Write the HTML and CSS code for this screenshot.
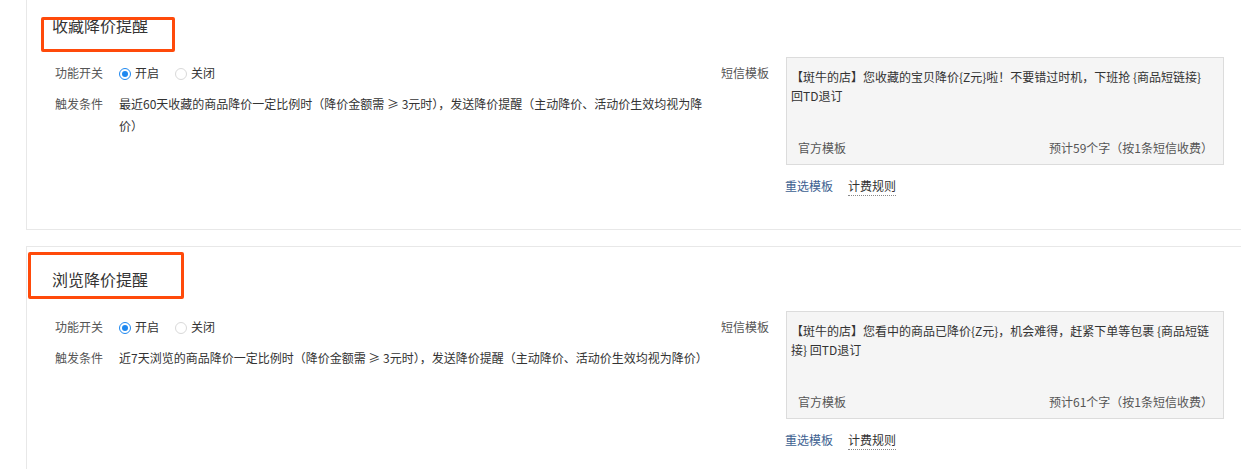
FILE: index.html
```html
<!DOCTYPE html>
<html lang="zh-CN">
<head>
<meta charset="utf-8">
<title>降价提醒</title>
<link rel="stylesheet" href="styles.css">
</head>
<body>
<div class="page">
  <section class="card card-first">
    <h2 class="card-title">收藏降价提醒</h2>
    <div class="mark mark-1"></div>
    <div class="card-body">
      <div class="left">
        <div class="row row-switch">
          <span class="label">功能开关</span>
          <div class="radios">
            <label class="radio"><span class="dot on"></span>开启</label>
            <label class="radio"><span class="dot"></span>关闭</label>
          </div>
        </div>
        <div class="row row-cond">
          <span class="label">触发条件</span>
          <p class="desc">最近60天收藏的商品降价一定比例时（降价金额需 ≥ 3元时），发送降价提醒（主动降价、活动价生效均视为降价）</p>
        </div>
      </div>
      <div class="right">
        <span class="label rlabel">短信模板</span>
        <div class="tpl">
          <div class="tpl-box">
            <p class="tpl-text">【斑牛的店】您收藏的宝贝降价{Z元}啦！不要错过时机，下班抢 {商品短链接} 回TD退订</p>
            <div class="tpl-foot"><span>官方模板</span><span>预计59个字（按1条短信收费）</span></div>
          </div>
          <div class="links"><a class="link-blue">重选模板</a><a class="link-dot">计费规则</a></div>
        </div>
      </div>
    </div>
  </section>

  <section class="card card-second">
    <h2 class="card-title">浏览降价提醒</h2>
    <div class="mark mark-2"></div>
    <div class="card-body">
      <div class="left">
        <div class="row row-switch">
          <span class="label">功能开关</span>
          <div class="radios">
            <label class="radio"><span class="dot on"></span>开启</label>
            <label class="radio"><span class="dot"></span>关闭</label>
          </div>
        </div>
        <div class="row row-cond">
          <span class="label">触发条件</span>
          <p class="desc">近7天浏览的商品降价一定比例时（降价金额需 ≥ 3元时），发送降价提醒（主动降价、活动价生效均视为降价）</p>
        </div>
      </div>
      <div class="right">
        <span class="label rlabel">短信模板</span>
        <div class="tpl">
          <div class="tpl-box">
            <p class="tpl-text">【斑牛的店】您看中的商品已降价{Z元}，机会难得，赶紧下单等包裹 {商品短链接} 回TD退订</p>
            <div class="tpl-foot"><span>官方模板</span><span>预计61个字（按1条短信收费）</span></div>
          </div>
          <div class="links"><a class="link-blue">重选模板</a><a class="link-dot">计费规则</a></div>
        </div>
      </div>
    </div>
  </section>
</div>
</body>
</html>
```

FILE: styles.css
```css
* { box-sizing: border-box; }
html, body {
  margin: 0;
  padding: 0;
  background: #fff;
  overflow: hidden;
}
body {
  font-family: "Noto Sans CJK SC", "Noto Sans", sans-serif;
  font-size: 12px;
  color: #333;
}
.page {
  padding-left: 26px;
  display: flex;
  flex-direction: column;
  gap: 16px;
}
.card {
  position: relative;
  border: 1px solid #e8e8e8;
  margin-right: -30px;
}
.card-first {
  margin-top: -8px;
  height: 238px;
}
.card-second {
  height: 260px;
}
.card-title {
  margin: 0;
  padding: 20px 0 0 25px;
  font-size: 16px;
  font-weight: normal;
  line-height: 24px;
  height: 44px;
  color: #333;
}
.mark {
  position: absolute;
  border: 3px solid #ff4a0a;
  border-radius: 2px;
}
.mark-1 { left: 14px; top: 24px; width: 134px; height: 35px; }
.mark-2 { left: 1px; top: 5px; width: 156px; height: 47px; }

.card-body {
  display: flex;
  margin-top: 20px;
  padding-left: 28px;
}
.left {
  width: 666px;
  flex: none;
}
.row {
  display: flex;
}
.label {
  color: #555;
  width: 64px;
  flex: none;
  line-height: 20px;
}
.row-switch {
  padding-top: 6px;
  line-height: 20px;
}
.row-cond {
  margin-top: 10px;
  line-height: 22px;
}
.row-cond .label { line-height: 22px; }
.radios {
  display: flex;
  gap: 16px;
}
.radio {
  display: flex;
  align-items: center;
  gap: 4px;
  color: #333;
}
.dot {
  width: 12px;
  height: 12px;
  border-radius: 50%;
  border: 1px solid #d9d9d9;
  background: #fff;
  position: relative;
  top: 1px;
}
.dot.on {
  border-color: #1e88f0;
}
.dot.on::after {
  content: "";
  position: absolute;
  left: 2px;
  top: 2px;
  width: 6px;
  height: 6px;
  border-radius: 50%;
  background: #1e88f0;
}
.desc {
  margin: 0;
  width: 596px;
  color: #333;
}
.right {
  display: flex;
}
.rlabel {
  width: 65px;
  padding-top: 6px;
}
.tpl {
  width: 438px;
}
.tpl-box {
  height: 108px;
  border: 1px solid #dcdcdc;
  background: #f5f5f5;
  display: flex;
  flex-direction: column;
  justify-content: space-between;
  padding: 9px 10px 6px 4px;
}
.tpl-text {
  margin: 0;
  line-height: 19px;
  color: #333;
}
.tpl-foot {
  display: flex;
  justify-content: space-between;
  line-height: 20px;
  padding-left: 7px;
  color: #555;
}
.links {
  display: flex;
  gap: 15px;
  margin-top: 11px;
  line-height: 20px;
  margin-left: -1px;
}
.link-blue {
  color: #3d5f91;
}
.link-dot {
  color: #333;
  border-bottom: 1px dotted #888;
  line-height: 17px;
  height: 20px;
  padding-top: 1px;
}
```
